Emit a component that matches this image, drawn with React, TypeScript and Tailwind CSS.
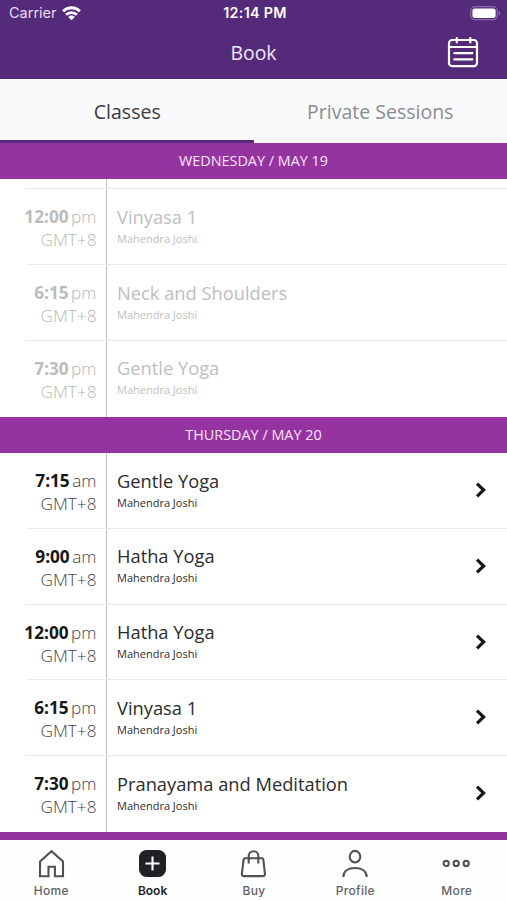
import clsx from "clsx";

interface ClassItem {
  time: string;
  period: "am" | "pm";
  name: string;
  teacher: string;
}

const wednesday: ClassItem[] = [
  { time: "12:00", period: "pm", name: "Vinyasa 1", teacher: "Mahendra Joshi" },
  { time: "6:15", period: "pm", name: "Neck and Shoulders", teacher: "Mahendra Joshi" },
  { time: "7:30", period: "pm", name: "Gentle Yoga", teacher: "Mahendra Joshi" },
];

const thursday: ClassItem[] = [
  { time: "7:15", period: "am", name: "Gentle Yoga", teacher: "Mahendra Joshi" },
  { time: "9:00", period: "am", name: "Hatha Yoga", teacher: "Mahendra Joshi" },
  { time: "12:00", period: "pm", name: "Hatha Yoga", teacher: "Mahendra Joshi" },
  { time: "6:15", period: "pm", name: "Vinyasa 1", teacher: "Mahendra Joshi" },
  { time: "7:30", period: "pm", name: "Pranayama and Meditation", teacher: "Mahendra Joshi" },
];

function StatusBar() {
  return (
    <div className="grid h-[27px] grid-cols-3 items-center pl-[9px] pr-[6px] font-['Inter',sans-serif] text-white">
      <div className="flex items-center gap-[5px]">
        <span className="text-[14.5px] leading-none text-[#e6dcf3]">Carrier</span>
        <svg width="19" height="15" viewBox="0 0 19 15" fill="none" stroke="#fff" strokeWidth="2.8">
          <path d="M1.1 5.2a12 12 0 0 1 16.8 0" />
          <path d="M4.1 8.8a7.7 7.7 0 0 1 10.8 0" />
          <path d="M9.5 14.2 6.2 10.9a4.7 4.7 0 0 1 6.6 0z" fill="#fff" stroke="none" />
        </svg>
      </div>
      <span className="text-center text-[14.3px] font-semibold leading-none tracking-[0.3px]">12:14 PM</span>
      <svg className="justify-self-end" width="31" height="15" viewBox="0 0 31 15" fill="none">
        <rect x="0.7" y="0.7" width="26.6" height="13" rx="4" stroke="#8569ab" strokeWidth="1.2" />
        <rect x="2.4" y="2.4" width="23.2" height="9.6" rx="2.3" fill="#fff" />
        <path d="M28.6 5v4.6c1.2-.5 1.8-1.3 1.8-2.3s-.6-1.8-1.8-2.3z" fill="#8569ab" />
      </svg>
    </div>
  );
}

function CalendarIcon() {
  return (
    <svg width="32" height="32" viewBox="0 0 32 32" fill="none" stroke="#fff" strokeWidth="2.2" strokeLinecap="round">
      <rect x="2" y="4" width="28" height="26.2" rx="3.2" />
      <path d="M2 11h28M9.8 2v4.4M23.3 2v4.4M7.3 17.2h18M7.3 23.4h18" />
    </svg>
  );
}

function DayHeader({ label }: { label: string }) {
  return (
    <div className="flex h-[36.5px] shrink-0 items-center justify-center bg-[#9534a0] text-[14.4px] leading-none text-[#f9e6fb]">
      {label}
    </div>
  );
}

function ClassRow({ item, past, last }: { item: ClassItem; past?: boolean; last?: boolean }) {
  return (
    <div className="h-[75.75px] shrink-0 pl-[26px]">
      <div className={clsx("flex h-full", !last && "border-b border-[#e9eaec]")}>
        <div
          className={clsx(
            "flex w-[81px] shrink-0 flex-col items-end border-r border-[#bfc0c2] pr-[9.5px] pt-[16px] text-[17.2px] font-light leading-[23px]",
            past ? "text-[#b6b6b7]" : "text-[#434446]"
          )}
        >
          <div className="whitespace-nowrap">
            <span className={clsx("mr-[2.5px] font-bold", past ? "text-[#bcbcbd]" : "text-[#161719]")}>
              {item.time}
            </span>
            <span className="text-[17.2px]">{item.period}</span>
          </div>
          <div>GMT+8</div>
        </div>
        <div
          className={clsx(
            "flex flex-1 justify-between pl-[10px] pr-[20px] pt-[14.5px]",
            past ? "text-[#bebebf]" : "text-[#2b2c2e]"
          )}
        >
          <div>
            <div className="text-[18.3px] leading-[26px]">{item.name}</div>
            <div className="text-[11px] leading-[17px]">{item.teacher}</div>
          </div>
          {!past && (
            <svg className="mt-[14.5px]" width="12" height="16" viewBox="0 0 12 16" fill="none" stroke="#161719" strokeWidth="3.2">
              <path d="M2 1.7 8.6 8 2 14.3" />
            </svg>
          )}
        </div>
      </div>
    </div>
  );
}

const tabs = [
  {
    label: "Home",
    icon: <path d="M4 12.5 15.5 2.2 27 12.5v14.8h-8.1v-9.5h-6.4v9.5H4z" />,
  },
  {
    label: "Book",
    active: true,
    icon: (
      <>
        <rect x="2" y="1" width="27" height="27" rx="7.5" fill="#202124" stroke="none" />
        <path d="M15.5 7.5v14M8.5 14.5h14" stroke="#fff" />
      </>
    ),
  },
  {
    label: "Buy",
    icon: (
      <>
        <path d="M7.2 9.2h16.6q1.3 0 1.5 1.3l1.6 14q.3 2.6-2.3 2.6H6.2q-2.600 0-2.300-2.600l1.700-14q.2-1.300 1.600-1.300z" />
        <path d="M10.7 14.500V7a4.800 4.800 0 0 1 9.600 0v7.500" />
      </>
    ),
  },
  {
    label: "Profile",
    icon: (
      <>
        <ellipse cx="15" cy="7.7" rx="5.300" ry="5.800" />
        <path d="M3.300 28c0-6 5-9 11.700-9s11.700 3 11.700 9" />
      </>
    ),
  },
  {
    label: "More",
    icon: (
      <>
        <circle cx="5.2" cy="14.400" r="2.600" />
        <circle cx="15.2" cy="14.400" r="2.600" />
        <circle cx="25.2" cy="14.400" r="2.600" />
      </>
    ),
  },
];

function BottomBar() {
  return (
    <nav className="grid h-[60px] grid-cols-5 bg-[#fdfefe] pt-[9px] font-['Inter',sans-serif]">
      {tabs.map((tab) => (
        <div key={tab.label} className="flex flex-col items-center">
          <svg width="30" height="30" viewBox="0 0 30 30" fill="none" stroke="#505154" strokeWidth="2.1">
            {tab.icon}
          </svg>
          <span
            className={clsx(
              "mt-[5px] pl-px text-[12px] leading-[14px]",
              tab.active ? "font-semibold text-[#242528]" : "font-medium tracking-[0.3px] text-[#626366]"
            )}
          >
            {tab.label}
          </span>
        </div>
      ))}
    </nav>
  );
}

export default function App() {
  return (
    <div className="flex h-[900px] w-[507px] flex-col overflow-hidden bg-white font-['Open_Sans',sans-serif]">
      <header className="h-[79px] shrink-0 bg-[#552a7b]">
        <StatusBar />
        <div className="grid h-[50px] grid-cols-3 items-center px-[28px]">
          <span className="col-start-2 pt-[2px] text-center text-[19.4px] leading-none text-[#f1e8fa]">Book</span>
          <span className="justify-self-end">
            <CalendarIcon />
          </span>
        </div>
      </header>

      <div className="grid h-[63.5px] shrink-0 grid-cols-2 bg-[#f8fafc] text-[19.5px]">
        <div className="flex items-center justify-center border-b-[3px] border-[#552a7b] pl-px pt-[5px] text-[#3a3b3e]">Classes</div>
        <div className="flex items-center justify-center pt-[2px] text-[#8b8c8f]">Private Sessions</div>
      </div>

      <DayHeader label="WEDNESDAY / MAY 19" />
      <main className="flex flex-1 flex-col overflow-hidden">
        <div className="h-[10.3px] shrink-0 pl-[26px]">
          <div className="h-full border-b border-[#e9eaec]">
            <div className="h-full w-[81px] border-r border-[#bfc0c2]" />
          </div>
        </div>
        {wednesday.map((item, i) => (
          <ClassRow key={item.time} item={item} past last={i === wednesday.length - 1} />
        ))}
        <DayHeader label="THURSDAY / MAY 20" />
        {thursday.map((item, i) => (
          <ClassRow key={item.time} item={item} last={i === thursday.length - 1} />
        ))}
        <div className="h-[8px] shrink-0 bg-[#9534a0]" />
      </main>

      <BottomBar />
    </div>
  );
}
